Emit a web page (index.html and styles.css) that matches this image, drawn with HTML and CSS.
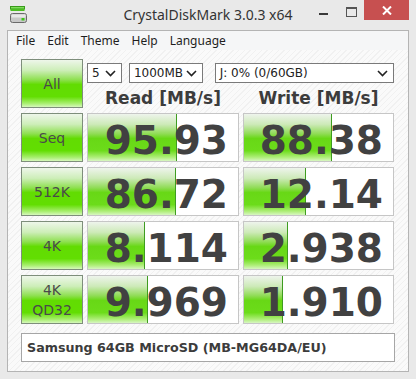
FILE: index.html
```
<!DOCTYPE html>
<html lang="en">
<head>
    <meta charset="UTF-8">
    <title>CrystalDiskMark 3.0.3 x64</title>
    <link rel="stylesheet" href="styles.css">
</head>
<body>
    <div class="window">
        <div class="titlebar">
            <div class="app-icon">
                <svg width="17" height="18" viewBox="0 0 17 18">
                    <rect x="0.5" y="0.5" width="14" height="2.5" fill="#7ee05a" stroke="#3a9a1c" stroke-width="1"/>
                    <rect x="0.5" y="3" width="14" height="2" fill="#4cbf22"/>
                    <rect x="0.5" y="7.5" width="16" height="9" rx="2" fill="#c8c8c8" stroke="#6a6a6a" stroke-width="1"/>
                    <rect x="1.5" y="8.5" width="14" height="3" fill="#e8e8e8"/>
                    <rect x="11.5" y="12" width="3" height="2.5" fill="#3cc61a"/>
                </svg>
            </div>
            <div class="title">CrystalDiskMark 3.0.3 x64</div>
            <div class="controls">
                <span class="ctl-min"></span>
                <span class="ctl-max"></span>
                <span class="ctl-close">
                    <svg width="10" height="9" viewBox="0 0 10 9">
                        <path d="M1 0.5 L9 8.5 M9 0.5 L1 8.5" stroke="#fff" stroke-width="2"/>
                    </svg>
                </span>
            </div>
        </div>

        <div class="client">
            <div class="menubar">
                <span>File</span>
                <span>Edit</span>
                <span>Theme</span>
                <span>Help</span>
                <span>Language</span>
            </div>

            <div class="content">
                <div class="board">
                    <div class="btn">All</div>
                    <div class="top-area">
                        <div class="selects">
                            <div class="select sel-count">
                                <span>5</span>
                                <svg width="11" height="7" viewBox="0 0 11 7"><path d="M1 1 L5.5 5.5 L10 1" fill="none" stroke="#222" stroke-width="1.6"/></svg>
                            </div>
                            <div class="select sel-size">
                                <span>1000MB</span>
                                <svg width="11" height="7" viewBox="0 0 11 7"><path d="M1 1 L5.5 5.5 L10 1" fill="none" stroke="#222" stroke-width="1.6"/></svg>
                            </div>
                            <div class="select sel-drive">
                                <span>J: 0% (0/60GB)</span>
                                <svg width="11" height="7" viewBox="0 0 11 7"><path d="M1 1 L5.5 5.5 L10 1" fill="none" stroke="#222" stroke-width="1.6"/></svg>
                            </div>
                        </div>
                        <div class="headers">
                            <div>Read [MB/s]</div>
                            <div>Write [MB/s]</div>
                        </div>
                    </div>

                    <div class="btn">Seq</div>
                    <div class="cell" style="--w: 89px">95.93</div>
                    <div class="cell" style="--w: 88px">88.38</div>

                    <div class="btn">512K</div>
                    <div class="cell" style="--w: 88px">86.72</div>
                    <div class="cell" style="--w: 62px">12.14</div>

                    <div class="btn">4K</div>
                    <div class="cell" style="--w: 57px">8.114</div>
                    <div class="cell" style="--w: 44px">2.938</div>

                    <div class="btn">4K<br>QD32</div>
                    <div class="cell" style="--w: 60px">9.969</div>
                    <div class="cell" style="--w: 39px">1.910</div>
                </div>

                <div class="comment">Samsung 64GB MicroSD (MB-MG64DA/EU)</div>
            </div>
        </div>
    </div>
</body>
</html>
```

FILE: styles.css
```
body {
    margin: 0;
    background: #e9e9e9;
    font-family: "DejaVu Sans", sans-serif;
    color: #404040;
}

.window {
    width: 416px;
    height: 379px;
    display: flex;
    flex-direction: column;
}

/* title bar */

.titlebar {
    height: 30px;
    display: grid;
    grid-template-columns: 1fr auto 1fr;
    align-items: start;
}

.app-icon {
    padding: 6px 0 0 10px;
}

.title {
    font-family: "Noto Sans", sans-serif;
    font-size: 14px;
    color: #333;
    padding-top: 5px;
}

.controls {
    display: flex;
    justify-content: flex-end;
    align-items: flex-start;
    padding-right: 7px;
}

.ctl-min {
    width: 9px;
    height: 2px;
    background: #3a3a3a;
    margin: 13px 18px 0 0;
}

.ctl-max {
    width: 9px;
    height: 7px;
    border: 1px solid #555;
    border-top-width: 2px;
    margin: 7px 7px 0 0;
}

.ctl-close {
    width: 45px;
    height: 20px;
    background: #c75050;
    display: flex;
    justify-content: center;
    align-items: center;
}

/* client area */

.client {
    flex: 1;
    margin: 0 7px 7px 7px;
    border: 1px solid #b4b4b4;
    display: flex;
    flex-direction: column;
}

.menubar {
    height: 19px;
    background: #f5f6f7;
    display: flex;
    font-family: "Noto Sans", sans-serif;
    font-size: 12px;
    color: #1e1e1e;
    padding-left: 8px;
    line-height: 19px;
}

.menubar span {
    margin-right: 12px;
}

.content {
    flex: 1;
    background: repeating-linear-gradient(135deg, #fafafa 0px, #fafafa 3px, #f1f1f1 3px, #f1f1f1 4px);
    padding: 9px 0 0 13px;
}

.board {
    display: grid;
    grid-template-columns: 62px 152px 151px;
    grid-auto-rows: 49px;
    column-gap: 4px;
    row-gap: 5px;
}

.btn {
    border: 1px solid #7e8e7b;
    background: linear-gradient(to bottom, #eef6ea 0%, #cdeeb8 22%, #8ee050 42%, #62dc02 52%, #62de02 78%, #a6ee6c 92%, #d6f8bc 100%);
    display: flex;
    justify-content: center;
    align-items: center;
    text-align: center;
    font-size: 14px;
    line-height: 20px;
    color: #4a4a4a;
}

.top-area {
    grid-column: span 2;
    display: flex;
    flex-direction: column;
}

.selects {
    display: flex;
    margin-top: 4px;
    height: 20px;
}

.select {
    box-sizing: border-box;
    height: 20px;
    border: 1px solid #7a7a7a;
    background: #fff;
    display: flex;
    justify-content: space-between;
    align-items: center;
    font-size: 12px;
    color: #222;
    padding: 0 5px 0 4px;
}

.sel-count {
    width: 35px;
    margin-right: 7px;
}

.sel-size {
    width: 74px;
    margin-right: 12px;
}

.sel-drive {
    width: 180px;
}

.headers {
    display: grid;
    grid-template-columns: 152px 151px;
    column-gap: 4px;
    font-weight: bold;
    font-size: 17px;
    color: #3c3c3c;
    text-align: center;
    padding-top: 5px;
}

.cell {
    border: 1px solid #c6c6c6;
    background:
        linear-gradient(to left, #3e9c20 1px, transparent 1px) no-repeat,
        linear-gradient(to bottom, #eef4ec 0%, #cdeab8 22%, #90dc56 42%, #68d816 52%, #6cdc1a 78%, #aeee78 92%, #d8f6c2 100%) no-repeat,
        #fff;
    background-size: var(--w) 100%, var(--w) 100%, auto;
    font-weight: bold;
    font-size: 39px;
    line-height: 49px;
    text-align: right;
    padding-right: 10px;
    padding-top: 2px;
    box-sizing: border-box;
    color: #414141;
}

.comment {
    width: 374px;
    box-sizing: border-box;
    height: 29px;
    margin-top: 9px;
    border: 1px solid #a6a6a6;
    background: #fff;
    font-weight: bold;
    font-size: 12.7px;
    line-height: 27px;
    padding-left: 5px;
    color: #3c3c3c;
}
```
